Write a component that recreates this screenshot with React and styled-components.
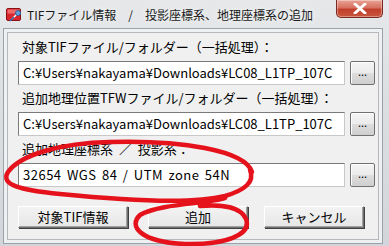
import styled, { createGlobalStyle } from 'styled-components';

const GlobalStyle = createGlobalStyle`
  html, body {
    margin: 0;
    padding: 0;
    background: #d8dbde;
  }
  #root {
    width: 389px;
    height: 246px;
    overflow: hidden;
  }
`;

const JP = `"Noto Sans CJK JP", "Noto Sans", sans-serif`;

const Window = styled.div`
  position: relative;
  width: 389px;
  height: 246px;
  box-sizing: border-box;
  background: linear-gradient(180deg, #e6e8ea 0%, #dcdfe2 40%, #d2d6da 100%);
  display: flex;
  flex-direction: column;
  font-family: ${JP};
`;

const TitleBar = styled.div`
  height: 28px;
  flex: 0 0 28px;
  display: flex;
  align-items: flex-start;
  padding-left: 6px;
  box-sizing: border-box;
`;

const TitleIcon = styled.svg`
  width: 16px;
  height: 16px;
  margin-top: 7px;
  flex: 0 0 auto;
`;

const TitleText = styled.div`
  margin-left: 5px;
  margin-top: 7px;
  font-size: 12px;
  line-height: 16px;
  color: #1a1a1a;
  white-space: nowrap;
  text-shadow: 0 0 6px rgba(255, 255, 255, 0.9);
`;

const CloseButton = styled.div`
  margin-left: auto;
  margin-right: 6px;
  width: 47px;
  height: 18px;
  box-sizing: border-box;
  border: 1px solid #7a2a22;
  border-top: none;
  border-radius: 0 0 5px 5px;
  background: linear-gradient(180deg, #e8a496 0%, #d7715f 45%, #c2402b 55%, #c9563c 100%);
  display: grid;
  place-items: center;
  box-shadow: inset 0 0 0 1px rgba(255, 255, 255, 0.35);
`;

const Frame = styled.div`
  margin: 0 6px 0 3px;
  height: 216px;
  box-sizing: border-box;
  border: 1px solid #9ca2a8;
  padding: 3px;
  background: #eef0f2;
`;

const Client = styled.div`
  height: 100%;
  box-sizing: border-box;
  border: 1px solid #b4b8bc;
  background: #f0f0f0;
  padding: 6px 3px 0 10px;
  display: flex;
  flex-direction: column;
`;

const Group = styled.div`
  display: flex;
  flex-direction: column;
  margin-bottom: 5px;
`;

const Label = styled.div`
  padding-left: 4px;
  height: 16px;
  font-size: 13px;
  line-height: 16px;
  color: #000;
  white-space: nowrap;
  margin-bottom: 6px;
  word-spacing: 3px;
`;

const Row = styled.div`
  display: flex;
  align-items: flex-start;
  gap: 5px;
`;

const TextBox = styled.div`
  width: 327px;
  height: 24px;
  box-sizing: border-box;
  border: 1px solid #7a7a7a;
  border-right-color: #c8c8c8;
  border-bottom-color: #c8c8c8;
  background: #fff;
  padding: 0 4px;
  font-size: 13px;
  line-height: 22px;
  color: #000;
  white-space: nowrap;
  overflow: hidden;
  letter-spacing: ${(p) => (p.$spaced ? '0.5px' : '0')};
  word-spacing: ${(p) => (p.$spaced ? '2px' : '0')};
`;

const DotsButton = styled.div`
  width: 25px;
  height: 24px;
  box-sizing: border-box;
  border: 1px solid #707070;
  border-radius: 2px;
  background: linear-gradient(180deg, #f4f4f4 0%, #ebebeb 50%, #dddddd 51%, #cfcfcf 100%);
  box-shadow: inset 1px 1px 0 #fff;
  font-size: 11px;
  line-height: 18px;
  text-align: center;
  color: #000;
`;

const ButtonRow = styled.div`
  display: flex;
  margin-top: 14px;
`;

const PushButton = styled.div`
  width: ${(p) => p.$w}px;
  margin-left: ${(p) => p.$ml}px;
  height: 22px;
  box-sizing: border-box;
  border: 1px solid #6f6f6f;
  border-top-color: #ffffff;
  border-left-color: #ffffff;
  box-shadow: 1px 1px 0 #404040, inset -1px -1px 0 #a0a0a0;
  background: linear-gradient(180deg, #f3f3f3 0%, #e6e6e6 100%);
  font-size: 13px;
  line-height: 20px;
  text-align: center;
  color: #000;
  white-space: nowrap;
`;

const Annotation = styled.svg`
  position: absolute;
  left: 0;
  top: 0;
  width: 389px;
  height: 246px;
  pointer-events: none;
`;

function Field({ label, value, spaced }) {
  return (
    <Group>
      <Label>{label}</Label>
      <Row>
        <TextBox $spaced={spaced}>{value}</TextBox>
        <DotsButton>...</DotsButton>
      </Row>
    </Group>
  );
}

export default function App() {
  return (
    <>
      <GlobalStyle />
      <Window>
        <TitleBar>
          <TitleIcon viewBox="0 0 16 16">
            <rect x="0.5" y="1.5" width="14" height="12" rx="1.5" fill="#d8262e" stroke="#8a1010" />
            <rect x="1.5" y="2.5" width="12" height="4" fill="#ef6a6a" />
            <path d="M7 11 L11 7" stroke="#fff" strokeWidth="1.6" />
            <circle cx="12" cy="6" r="2.5" fill="#6aa0d8" stroke="#2c5f99" />
            <path d="M4 14 L8 10" stroke="#3a6fb0" strokeWidth="1.6" />
          </TitleIcon>
          <TitleText>TIFファイル情報　/　投影座標系、地理座標系の追加</TitleText>
          <CloseButton>
            <svg width="14" height="11" viewBox="0 0 14 11">
              <path d="M2 1 L12 10 M12 1 L2 10" stroke="#fff" strokeWidth="3" strokeLinecap="round" />
            </svg>
          </CloseButton>
        </TitleBar>
        <Frame>
          <Client>
            <Field
              label="対象TIFファイル/フォルダー（一括処理）："
              value="C:¥Users¥nakayama¥Downloads¥LC08_L1TP_107C"
            />
            <Field
              label="追加地理位置TFWファイル/フォルダー（一括処理）："
              value="C:¥Users¥nakayama¥Downloads¥LC08_L1TP_107C"
            />
            <Field
              label="追加地理座標系 ／ 投影系："
              value="32654 WGS 84 / UTM zone 54N"
              spaced
            />
            <ButtonRow>
              <PushButton $w={110} $ml={0}>対象TIF情報</PushButton>
              <PushButton $w={100} $ml={20}>追加</PushButton>
              <PushButton $w={100} $ml={16}>キャンセル</PushButton>
            </ButtonRow>
          </Client>
        </Frame>
        <Annotation viewBox="0 0 389 246">
          <path
            d="M252 172 C245 150 180 140 110 142 C60 143 20 155 8 172 C0 185 20 190 60 194 C120 200 190 205 225 196 C245 190 255 182 250 170"
            fill="none"
            stroke="#e5121c"
            strokeWidth="4.5"
            strokeLinecap="round"
          />
          <path
            d="M225 198 C210 204 160 203 140 215 C128 226 140 242 185 244 C225 245 252 235 246 219 C241 207 222 204 200 206"
            fill="none"
            stroke="#e5121c"
            strokeWidth="4.5"
            strokeLinecap="round"
          />
        </Annotation>
      </Window>
    </>
  );
}
